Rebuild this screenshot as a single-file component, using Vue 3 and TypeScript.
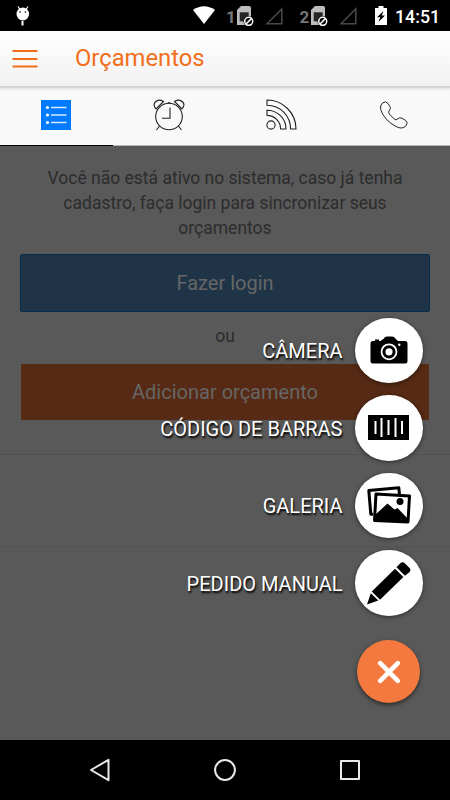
<script setup lang="ts">
type ActionIcon = 'camera' | 'barcode' | 'gallery' | 'pencil'

interface Action {
  label: string
  icon: ActionIcon
}

const actions: Action[] = [
  { label: 'CÂMERA', icon: 'camera' },
  { label: 'CÓDIGO DE BARRAS', icon: 'barcode' },
  { label: 'GALERIA', icon: 'gallery' },
  { label: 'PEDIDO MANUAL', icon: 'pencil' },
]

const sims: number[] = [1, 2]
</script>

<template>
  <div class="screen">
    <div class="status">
      <svg class="bug" width="14" height="21" viewBox="0 0 14 21">
        <path d="M2 .5l2 3M12 .5l-2 3" stroke="#fff" stroke-width="1.2" />
        <ellipse cx="6.800" cy="8" rx="6.300" ry="6.500" fill="#fff" />
        <circle cx="4" cy="6" r=".8" /><circle cx="9.400" cy="6" r=".8" />
        <path d="M6.500 15v4.500" stroke="#fff" stroke-width="2" />
      </svg>
      <svg class="wifi" width="22" height="18" viewBox="0 0 22 18">
        <path d="M0 4Q11-3.5 22 4L11 18z" fill="#fff" />
      </svg>
      <div v-for="sim in sims" :key="sim" class="sim">
        <span class="sim-number">{{ sim }}</span>
        <svg width="17" height="20" viewBox="0 0 17 20">
          <path d="M4 0h8q2 0 2 2v17H0V4z" fill="#bdbdbf" />
          <path d="M2.7 6.3h9v9h-9z" fill="#252525" />
          <circle cx="11.7" cy="15.3" r="5.2" fill="#000" />
          <circle cx="11.7" cy="15.3" r="4" fill="none" stroke="#fff" stroke-width="1.5" />
          <path d="M9 18l5.4-5.4" stroke="#fff" stroke-width="1.5" />
        </svg>
        <svg class="signal" width="18" height="18" viewBox="0 0 18 18">
          <path d="M2 16.8L16.8 2v14.8z" fill="none" stroke="#484848" stroke-width="1.6" />
        </svg>
      </div>
      <svg class="battery" width="12" height="19" viewBox="0 0 12 19">
        <path d="M3.5 0h5v2H12v17H0V2h3.500z" fill="#fff" />
        <path d="M8.5 5L2 11.200h3.300L3.500 16 10 9.500H6.800z" />
      </svg>
      <span class="clock">14:51</span>
    </div>

    <header class="header">
      <svg width="26" height="18" viewBox="0 0 26 18">
        <path d="M.5 1h25M.5 9h25M.5 16.500h25" stroke="#f16f1b" stroke-width="2" />
      </svg>
      <h1>Orçamentos</h1>
    </header>

    <nav class="tabs">
      <div class="tab active">
        <svg width="30" height="30" viewBox="0 0 30 30">
          <path d="M0 0h30v30H0z" fill="#007aff" />
          <path d="M10 7.500h15.500M10 15h15.500M10 22.500h15.500" stroke="#d5e9ff" stroke-width="1.400" />
          <g fill="#fff"><circle cx="6.500" cy="7.500" r="1.600" /><circle cx="6.500" cy="15" r="1.600" /><circle cx="6.500" cy="22.500" r="1.600" /></g>
        </svg>
      </div>
      <div class="tab">
        <svg width="32" height="32" viewBox="0 0 32 32" fill="none" stroke="#222" stroke-width="1.100">
          <circle cx="16" cy="17.500" r="13.300" />
          <path d="M17 8.500v10.800H9M14.800 3.800h2.500M6.500 27l-3 4M25.500 27l3 4" />
          <path d="M3 10Q-.5 6 2.300 3 5.800-.5 10.500 2.500zM29 10q3.500-4 .7-7Q26.200-.5 21.500 2.500z" />
        </svg>
      </div>
      <div class="tab">
        <svg width="31" height="31" viewBox="0 0 31 31" fill="none" stroke="#222" stroke-width="1.100">
          <circle cx="5" cy="26" r="4.100" />
          <path d="M1 1v5.200c13.200 0 23.600 10.600 23.600 23.800H30C30 14 17 1 1 1z" />
          <path d="M1 11.200v5.200C8.500 16.400 14.600 22.500 14.600 30H20C20 19.600 11.500 11.200 1 11.200z" />
        </svg>
      </div>
      <div class="tab">
        <svg width="30" height="30" viewBox="0 0 30 30" fill="none" stroke="#222" stroke-width="1">
          <path d="M3.500 3Q6.700.3 9 3.500l2 3.100q1.200 2-.6 3.800-1.700 1.800.2 3.900l4.500 4.600q1.800 1.600 3.300.2 2-2 4.300-1l3.900 2.300q3 2 .3 5.500-3.800 4-10 .5Q4.900 20 1.700 9.500.7 5.500 3.500 3z" />
        </svg>
      </div>
    </nav>

    <main class="content">
      <p class="message">Você não está ativo no sistema, caso já tenha<br />cadastro, faça login para sincronizar seus<br />orçamentos</p>
      <button class="button login">Fazer login</button>
      <p class="or">ou</p>
      <button class="button add">Adicionar orçamento</button>
      <div class="row"></div>

      <div class="fab-menu">
        <div v-for="action in actions" :key="action.icon" class="action">
          <span class="action-label">{{ action.label }}</span>
          <div class="action-circle">
            <svg v-if="action.icon === 'camera'" width="38" height="28" viewBox="0 0 38 28">
              <path d="M3 5h2V3.500h4V5h1.500L14 2.500Q14.500.5 17 .5h5q2.500 0 3.300 2L28 5h7q2.500 0 2.500 2.500V25q0 2.500-2.500 2.500H3Q.5 27.500.5 25V7.500Q.5 5 3 5z" />
              <circle cx="19" cy="15.800" r="7.500" fill="none" stroke="#fff" stroke-width="1.800" />
              <circle cx="19" cy="15.800" r="3.600" fill="#fff" />
              <circle cx="29.300" cy="8.800" r="1.200" fill="#fff" />
            </svg>
            <svg v-else-if="action.icon === 'barcode'" width="41" height="25" viewBox="0 0 41 25">
              <path d="M0 0h41v25H0z" />
              <path d="M7.500 6v13M13.500 3v19M20.500 5v15M27.500 3v19M34 6v13" stroke="#fff" stroke-width="2" />
            </svg>
            <svg v-else-if="action.icon === 'gallery'" width="44" height="38" viewBox="0 0 44 38">
              <path d="M6 28.500L3.800 28 1.800 4.500l30-2.800L32.500 9" fill="none" stroke="#000" stroke-width="3" stroke-linejoin="round" />
              <path d="M9 8l33.500 2-1.500 26-33.500-1.500z" fill="#fff" stroke="#000" stroke-width="3" stroke-linejoin="round" />
              <path d="M8 29l12.500-11.500 7 6 3-1.500L42 34l-1 2-33-1.500z" /><circle cx="33" cy="15.500" r="3.500" />
            </svg>
            <svg v-else width="44" height="44" viewBox="0 0 44 44">
              <path d="M0 43.500l3.800-11.200 7.500 7.200zM4.800 30.500L28 7.800l8.400 8.300L13 38.800zM29.500 6.200l3.800-4q2.200-2 4.500 0l4.500 4.500q2.200 2.200 0 4.500l-4.300 3.600z" />
            </svg>
          </div>
        </div>
        <div class="fab-close">
          <svg width="24" height="24" viewBox="0 0 24 24"><path d="M3.200 3.200l17.600 17.600M20.800 3.200L3.200 20.800" stroke="#fff" stroke-width="4.600" stroke-linecap="round" /></svg>
        </div>
      </div>
    </main>

    <footer class="navbar">
      <svg width="22" height="26" viewBox="0 0 22 26"><path d="M2 13L19.500 2.800v20.400z" /></svg>
      <svg width="24" height="26" viewBox="0 0 24 26"><circle cx="12" cy="13" r="9.900" /></svg>
      <svg width="22" height="26" viewBox="0 0 22 26"><path d="M2 4h18v18H2z" /></svg>
    </footer>
  </div>
</template>

<style>
body {
  margin: 0;
  background: #000;
}
</style>

<style scoped>
.screen {
  width: 450px;
  height: 800px;
  display: flex;
  flex-direction: column;
  overflow: hidden;
  background: #595959;
  font-family: Roboto, sans-serif;
}
svg {
  display: block;
  flex: none;
}
.status {
  height: 31px;
  flex: none;
  display: flex;
  align-items: flex-start;
  box-sizing: border-box;
  padding: 6px 0 0 16px;
  background: #000;
}
.wifi {
  margin-left: 163px;
}
.sim {
  width: 73.500px;
  display: flex;
}
.sim:first-of-type {
  margin-left: 11px;
}
.sim-number {
  width: 11px;
  font-size: 17px;
  font-weight: 700;
  line-height: 22px;
  color: #777;
}
.signal {
  margin: 1px 0 0 11px;
}
.battery {
  margin-left: 2px;
}
.clock {
  margin-left: 8px;
  font-size: 17.800px;
  font-weight: 500;
  line-height: 21px;
  color: #fff;
}
.header {
  position: relative;
  z-index: 1;
  height: 55px;
  flex: none;
  display: flex;
  align-items: center;
  box-sizing: border-box;
  padding: 0 0 0 12px;
  background: linear-gradient(#fff, #f1f1f1);
  box-shadow: 0 2px 1px #d3d5d4, 0 3px 3px #ddd;
}
.header svg {
  margin-top: 1px;
}
h1 {
  margin: -2px 0 0 37px;
  font-size: 23.800px;
  font-weight: 400;
  line-height: 30px;
  color: #f16f1b;
}
.tabs {
  height: 60px;
  flex: none;
  display: grid;
  grid-template-columns: repeat(4, 1fr);
  background: #f9f9f9;
}
.tab {
  display: flex;
  align-items: center;
  justify-content: center;
  box-sizing: border-box;
  padding-bottom: 2px;
  border-bottom: 1px solid #b5b5b5;
}
.tab.active {
  border-bottom-color: #000;
}
.content {
  position: relative;
  height: 594px;
  flex: none;
  display: flex;
  flex-direction: column;
  box-sizing: border-box;
  padding-top: 20px;
}
.message,
.or {
  margin: 0;
  text-align: center;
  font-size: 17.500px;
  line-height: 25px;
  color: #2c2c2c;
}
.button {
  display: block;
  padding: 0;
  font-family: inherit;
  font-size: 20px;
  text-align: center;
  color: #666;
}
.login {
  height: 58px;
  margin: 13px 20px 0;
  box-sizing: border-box;
  border: 1px solid #062e4c;
  border-radius: 2px;
  background: #203448;
}
.or {
  margin-top: 12px;
}
.add {
  height: 56px;
  margin: 15px 21px 0;
  border: 0;
  background: #562a14;
}
.row {
  height: 91px;
  margin-top: 34px;
  border-top: 1px solid #515151;
  border-bottom: 1px solid #535353;
}
.fab-menu {
  position: absolute;
  top: 171.500px;
  right: 27.500px;
  display: flex;
  flex-direction: column;
  align-items: flex-end;
  gap: 12px;
}
.action {
  display: flex;
  align-items: center;
  gap: 12.500px;
}
.action-label {
  padding-top: 2px;
  font-size: 20px;
  line-height: 24px;
  color: #fff;
  text-shadow: 1px 2px 2px #000;
}
.action-circle {
  width: 67.500px;
  height: 65.500px;
  display: flex;
  align-items: center;
  justify-content: center;
  border-radius: 50%;
  background: #fff;
  box-shadow: 0 1px 4px rgba(0, 0, 0, 0.5);
}
.fab-close {
  width: 63px;
  height: 63px;
  margin: 12.500px 2.500px 0 0;
  display: flex;
  align-items: center;
  justify-content: center;
  border-radius: 50%;
  background: #f4793e;
  box-shadow: 0 2px 4px rgba(0, 0, 0, 0.55);
}
.navbar {
  height: 60px;
  flex: none;
  display: flex;
  align-items: center;
  justify-content: space-between;
  box-sizing: border-box;
  padding: 0 89px;
  background: #000;
}
.navbar svg {
  fill: none;
  stroke: #e8e8e8;
  stroke-width: 2;
  stroke-linejoin: round;
}
</style>
